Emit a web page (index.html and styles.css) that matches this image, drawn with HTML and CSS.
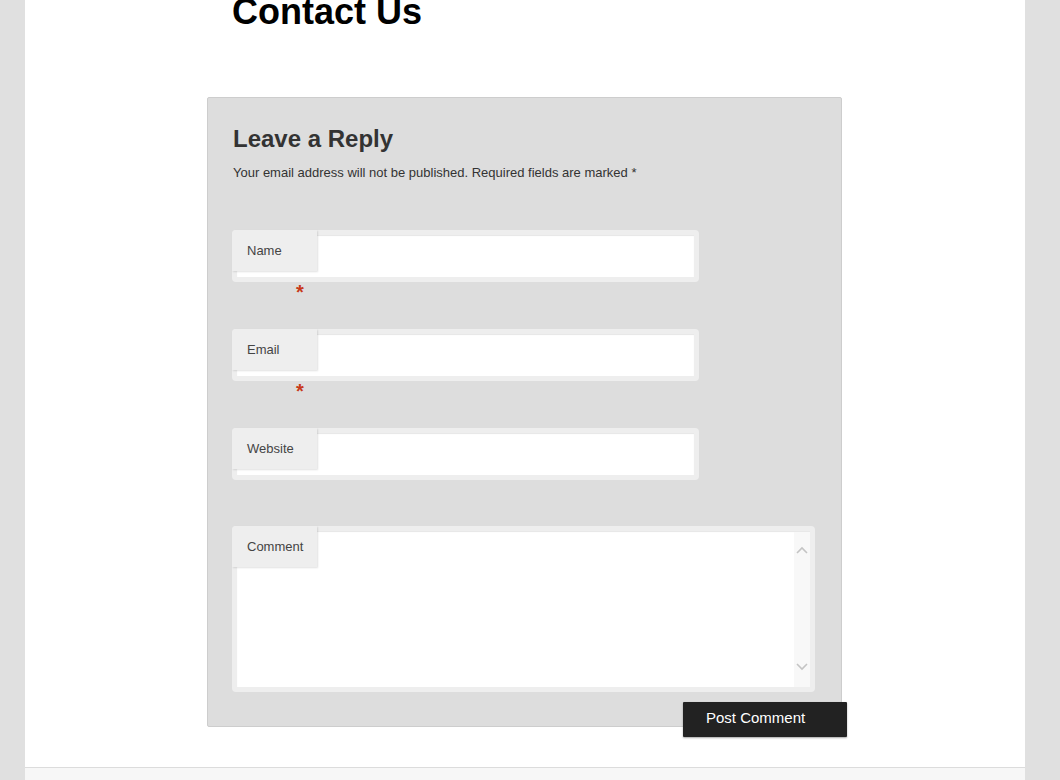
FILE: index.html
```html
<!DOCTYPE html>
<html lang="en">
<head>
<meta charset="utf-8">
<title>Contact Us</title>
<link rel="stylesheet" href="styles.css">
</head>
<body>
<div class="page">
  <main class="content">
    <h1 class="entry-title">Contact Us</h1>
    <section class="respond">
      <h2 class="reply-title">Leave a Reply</h2>
      <p class="notes">Your email address will not be published. Required fields are marked *</p>
      <form class="comment-form">
        <div class="field">
          <div class="field-box">
            <label class="field-label" for="author">Name</label>
            <input class="field-input" id="author" type="text">
          </div>
          <span class="req">*</span>
        </div>
        <div class="field">
          <div class="field-box">
            <label class="field-label" for="email">Email</label>
            <input class="field-input" id="email" type="text">
          </div>
          <span class="req">*</span>
        </div>
        <div class="field field-optional">
          <div class="field-box">
            <label class="field-label" for="url">Website</label>
            <input class="field-input" id="url" type="text">
          </div>
        </div>
        <div class="field field-comment">
          <div class="field-box comment-box">
            <label class="field-label" for="comment">Comment</label>
            <div class="textarea-wrap">
              <textarea class="field-textarea" id="comment"></textarea>
              <div class="scrollbar">
                <svg class="chev" width="12" height="8" viewBox="0 0 12 8"><path d="M1 7 L6 2 L11 7" fill="none" stroke="#c4c4c4" stroke-width="1.6"/></svg>
                <svg class="chev" width="12" height="8" viewBox="0 0 12 8"><path d="M1 1 L6 6 L11 1" fill="none" stroke="#c4c4c4" stroke-width="1.6"/></svg>
              </div>
            </div>
          </div>
        </div>
        <div class="form-submit">
          <button class="submit" type="button">Post Comment</button>
        </div>
      </form>
    </section>
  </main>
  <footer class="site-footer"></footer>
</div>
</body>
</html>
```
FILE: styles.css
```css
html, body {
  margin: 0;
  padding: 0;
}
body {
  background: #e0e0e0;
  font-family: "Liberation Sans", Arial, sans-serif;
  color: #333;
  overflow: hidden;
}
.page {
  display: flow-root;
  width: 1000px;
  margin: 0 35px 0 25px;
  background: #fff;
}
.content {
  display: flow-root;
  width: 635px;
  margin-left: 182px;
}
.entry-title {
  margin: -6px 0 67px 25px;
  font-size: 36px;
  line-height: 36px;
  font-weight: bold;
  color: #000;
}
.respond {
  background: #dddddd;
  border: 1px solid #cdcdcd;
  border-radius: 2px;
  padding: 26px 26px 0 24px;
  margin-bottom: 40px;
}
.reply-title {
  margin: 0 0 9px 1px;
  font-size: 24px;
  line-height: 29px;
  font-weight: bold;
  color: #333;
}
.notes {
  margin: 0 0 47px 1px;
  font-size: 13px;
  line-height: 21px;
  color: #333;
}
.comment-form {
  margin: 0;
}
.field {
  margin-bottom: 27px;
}
.field-optional {
  margin-bottom: 46px;
}
.field-comment {
  margin-bottom: 0;
}
.field-box {
  position: relative;
  width: 457px;
  padding: 5px;
  background: #eeeeee;
  border-radius: 4px;
}
.comment-box {
  width: 573px;
}
.field-label {
  position: absolute;
  top: 0;
  left: 0;
  box-sizing: border-box;
  width: 85px;
  height: 41px;
  padding: 1px 0 0 15px;
  background: #eeeeee;
  border-radius: 4px 0 0 0;
  box-shadow: 1px 1px 2px rgba(0, 0, 0, 0.12);
  font-size: 13px;
  line-height: 40px;
  color: #444;
}
.field-input {
  display: block;
  box-sizing: border-box;
  width: 457px;
  height: 42px;
  margin: 0;
  border: 0;
  padding: 0 0 0 90px;
  background: #fff;
  box-shadow: inset 0 1px 1px rgba(0, 0, 0, 0.1);
  outline: none;
  font: 14px "Liberation Sans", Arial, sans-serif;
}
.textarea-wrap {
  display: flex;
  height: 156px;
  background: #fff;
  box-shadow: inset 0 1px 1px rgba(0, 0, 0, 0.1);
}
.field-textarea {
  flex: 1;
  margin: 0;
  border: 0;
  padding: 0;
  background: transparent;
  resize: none;
  outline: none;
  overflow: hidden;
  font: 14px "Liberation Sans", Arial, sans-serif;
}
.scrollbar {
  width: 16px;
  margin-top: 1px;
  background: #f8f8f8;
  display: flex;
  flex-direction: column;
  justify-content: space-between;
  align-items: center;
  padding: 14px 0 16px;
}
.chev {
  display: block;
}
.req {
  display: block;
  height: 20px;
  margin-left: 64px;
  font-size: 20px;
  line-height: 20px;
  font-weight: bold;
  color: #c8391a;
}
.form-submit {
  display: flex;
  justify-content: flex-end;
  height: 24px;
  margin: 10px -32px 0 0;
}
.submit {
  box-sizing: border-box;
  width: 164px;
  height: 35px;
  margin: 0;
  border: 0;
  border-radius: 1px;
  padding: 0 0 5px 23px;
  text-align: left;
  background: #222222;
  color: #fff;
  font: 15px "Liberation Sans", Arial, sans-serif;
  box-shadow: 0 1px 2px rgba(0, 0, 0, 0.35);
  cursor: pointer;
}
.site-footer {
  border-top: 1px solid #dcdcdc;
  background: #f7f7f7;
  height: 12px;
}
```
